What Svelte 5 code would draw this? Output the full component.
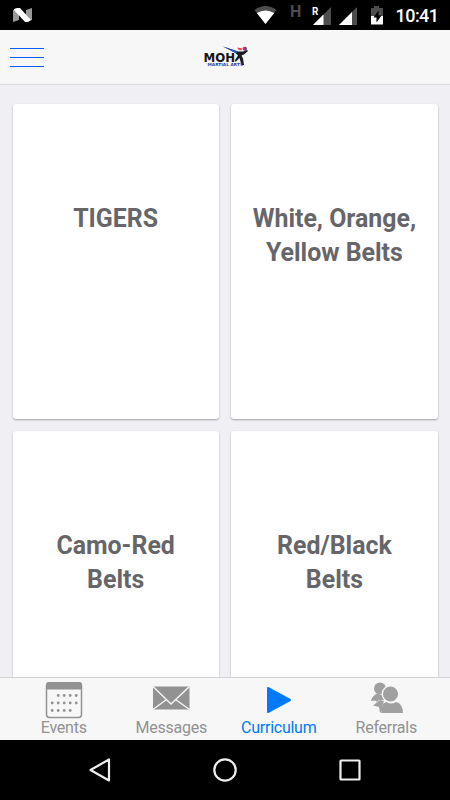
<script>
  let activeTab = $state("Curriculum");

  const tabs = ["Events", "Messages", "Curriculum", "Referrals"];

  const courses = [
    ["TIGERS"],
    ["White, Orange,", "Yellow Belts"],
    ["Camo-Red", "Belts"],
    ["Red/Black", "Belts"]
  ];

  // dots of the calendar icon, row by row
  const days = [
    [13, 19, 25, 31],
    [7, 13, 19, 25, 31],
    [7, 13, 19, 25]
  ];
</script>

<div class="screen">
  <div class="status">
    <svg width="450" height="30" viewBox="0 0 450 30">
      <path d="M13 10l6-2v12l-6 2zM26 10l6-2v12l-6 2z" fill="#999" />
      <path d="M14 9l3-1h3l11 12-3 2h-3L14 10z" fill="#fff" />
      <path d="M254.500 10q11-8 22 0l-11 14z" fill="#4d4d4d" />
      <path d="M256.800 13q8.700-5 17.400 0l-8.700 11z" fill="#fff" />
      <text x="290" y="16.500" font-size="16" font-weight="700" fill="#4d4d4d">H</text>
      <path d="M331 7v18h-18z" fill="#4d4d4d" />
      <path d="M323.500 14.500V25H313z" fill="#fff" />
      <text x="312" y="15" font-size="10" font-weight="700" fill="#fff">R</text>
      <path d="M357 7v18h-18z" fill="#4d4d4d" />
      <path d="M352 12v13h-13z" fill="#fff" />
      <path d="M371 8h3V6h5v2h4v9h-12z" fill="#4d4d4d" />
      <path d="M371 16h12v8.500h-12z" fill="#fff" />
      <path d="M378.500 10.500l-5 7h3v5l5-7h-3z" fill="#000" />
      <text x="395.500" y="22" font-size="18" font-weight="500" fill="#fff" textLength="43.500">10:41</text>
    </svg>
  </div>

  <header>
    <button class="menu" aria-label="Menu">
      <span></span>
      <span></span>
      <span></span>
    </button>
    <svg class="logo" width="46" height="24" viewBox="0 0 46 24">
      <text class="wordmark" x="0.500" y="17" textLength="31.500" lengthAdjust="spacingAndGlyphs">MOH</text>
      <path d="M20 1.500L35 6.500h5l4-1.500 1 1-4 3.500-2.500 1 1.500 3 1 6.500h-2.500L36.500 13l-4 4-.500-2 3-4.500-3-3z" fill="#1b1b1f" />
      <path d="M20 1.500L35 6.500l-2 1.700z" fill="#1f55c4" />
      <path d="M34.500 2.500l4.500 1-.500 2-3.500-1z" fill="#ee3f4c" />
      <circle cx="41.500" cy="3.700" r="2" fill="#ee2f3c" />
      <path d="M42 1.700l2 1-.500 3-2 .500z" fill="#3558c0" />
      <text class="tagline" x="4.500" y="21" textLength="35.500" lengthAdjust="spacingAndGlyphs">MARTIAL ARTS</text>
    </svg>
  </header>

  <main>
    {#each courses as lines}
      <div class="card">
        <h2>
          {#each lines as line}
            <span>{line}</span>
          {/each}
        </h2>
      </div>
    {/each}
  </main>

  <nav class="tabs">
    {#each tabs as tab}
      <button class="tab" class:active={tab === activeTab} onclick={() => (activeTab = tab)}>
        {#if tab === "Events"}
          <svg width="38" height="38" viewBox="0 0 38 38">
            <rect x="1.500" y="1.800" width="35" height="34.700" rx="3" fill="none" stroke="currentColor" stroke-width="1.500" />
            <path d="M1 8.500V4q0-3 3-3h30q3 0 3 3v4.500z" fill="currentColor" />
            {#each days as row, i}
              {#each row as x}
                <circle cx={x + 0.2} cy={14.5 + i * 7.5} r="1.400" fill="currentColor" />
              {/each}
            {/each}
          </svg>
        {:else if tab === "Messages"}
          <svg width="38" height="38" viewBox="0 0 38 38">
            <rect x="1" y="5.500" width="36.500" height="23" fill="currentColor" />
            <path d="M1 5.500l18 17.500L37.500 5.500M1 28.500l13.500-10M37.500 28.500L23.500 18.500" fill="none" stroke="#f7f7f7" stroke-width="1.400" />
          </svg>
        {:else if tab === "Curriculum"}
          <svg width="38" height="38" viewBox="0 0 38 38">
            <path d="M8 7v24l22-12z" fill="currentColor" stroke="currentColor" stroke-width="2" stroke-linejoin="round" />
          </svg>
        {:else}
          <svg class="people" width="38" height="38" viewBox="0 0 38 38">
            <circle cx="13" cy="7.500" r="6" fill="currentColor" />
            <path d="M4 20q1-5 6-7.500l6 2 1 4.500h-5l-2 2-2-1.500z" fill="currentColor" />
            <path d="M6 24.500l7-5.500 4 1-2 5 2 3-4 4-1-6z" fill="currentColor" />
            <path d="M14 32l2-4.500-1-3q1-3 5-3.500 4 3 9 0 6.500 1 7 11z" fill="currentColor" />
            <circle cx="23.500" cy="13" r="8.200" fill="currentColor" stroke="#f7f7f7" stroke-width="1.300" />
          </svg>
        {/if}
        <span>{tab}</span>
      </button>
    {/each}
  </nav>

  <div class="system">
    <svg width="24" height="24" viewBox="0 0 24 24">
      <path d="M21 1.500v21L2.500 12z" />
    </svg>
    <svg width="24" height="24" viewBox="0 0 24 24">
      <circle cx="12" cy="12" r="10.700" />
    </svg>
    <svg width="24" height="24" viewBox="0 0 24 24">
      <rect x="2.500" y="2.500" width="19" height="19" rx="0.500" />
    </svg>
  </div>
</div>

<style>
  :global(body) {
    margin: 0;
  }

  .screen {
    display: flex;
    flex-direction: column;
    width: 450px;
    height: 800px;
    overflow: hidden;
    background: #efeff4;
    font-family: Roboto, sans-serif;
  }

  svg {
    display: block;
  }

  .status {
    height: 30px;
    flex: none;
    background: #000;
  }

  header {
    display: grid;
    grid-template-columns: 1fr 46px 1fr;
    align-items: center;
    box-sizing: border-box;
    height: 55px;
    flex: none;
    padding: 0 10px;
    background: #f7f7f7;
    border-bottom: 1px solid #dadadb;
  }

  button {
    padding: 0;
    border: 0;
    background: none;
    font: inherit;
  }

  .menu {
    display: flex;
    flex-direction: column;
    gap: 7.5px;
    width: 34px;
    padding-top: 1px;
  }

  .menu span {
    height: 1.4px;
    background: #0b5cff;
  }

  .logo {
    margin-left: 1px;
    margin-bottom: 1px;
  }

  .wordmark {
    font-family: "DejaVu Sans", sans-serif;
    font-size: 13px;
    font-weight: 700;
    fill: #151517;
  }

  .tagline {
    font-family: "DejaVu Sans", sans-serif;
    font-size: 4px;
    font-weight: 700;
    fill: #2148ad;
  }

  main {
    display: grid;
    grid-template-columns: 1fr 1fr;
    grid-auto-rows: 315px;
    gap: 12.5px;
    flex: 1;
    min-height: 0;
    overflow: hidden;
    padding: 18.7px 12.5px 0;
  }

  .card {
    padding-top: 98px;
    box-sizing: border-box;
    border-radius: 3px;
    background: #fff;
    box-shadow: 0 1px 2px rgba(0, 0, 0, 0.32);
  }

  h2 {
    margin: 0;
    font-size: 24.9px;
    font-weight: 700;
    line-height: 34px;
    text-align: center;
    color: #66666a;
  }

  h2 span {
    display: block;
  }

  .tabs {
    display: flex;
    box-sizing: border-box;
    height: 63px;
    flex: none;
    padding: 3px 10px 0;
    background: #f7f7f7;
    border-top: 1px solid #d2d2d4;
  }

  .tab {
    display: flex;
    flex: 1;
    flex-direction: column;
    align-items: center;
    font-size: 16px;
    line-height: 18px;
    letter-spacing: -0.25px;
    color: #929292;
  }

  .tab.active {
    color: #007aff;
  }

  .people {
    color: #a0a0a0;
  }

  .system {
    display: flex;
    justify-content: space-between;
    align-items: center;
    box-sizing: border-box;
    height: 60px;
    flex: none;
    padding: 0 88px;
    background: #000;
  }

  .system svg {
    fill: none;
    stroke: #eee;
    stroke-width: 2.2;
    stroke-linejoin: round;
  }
</style>
